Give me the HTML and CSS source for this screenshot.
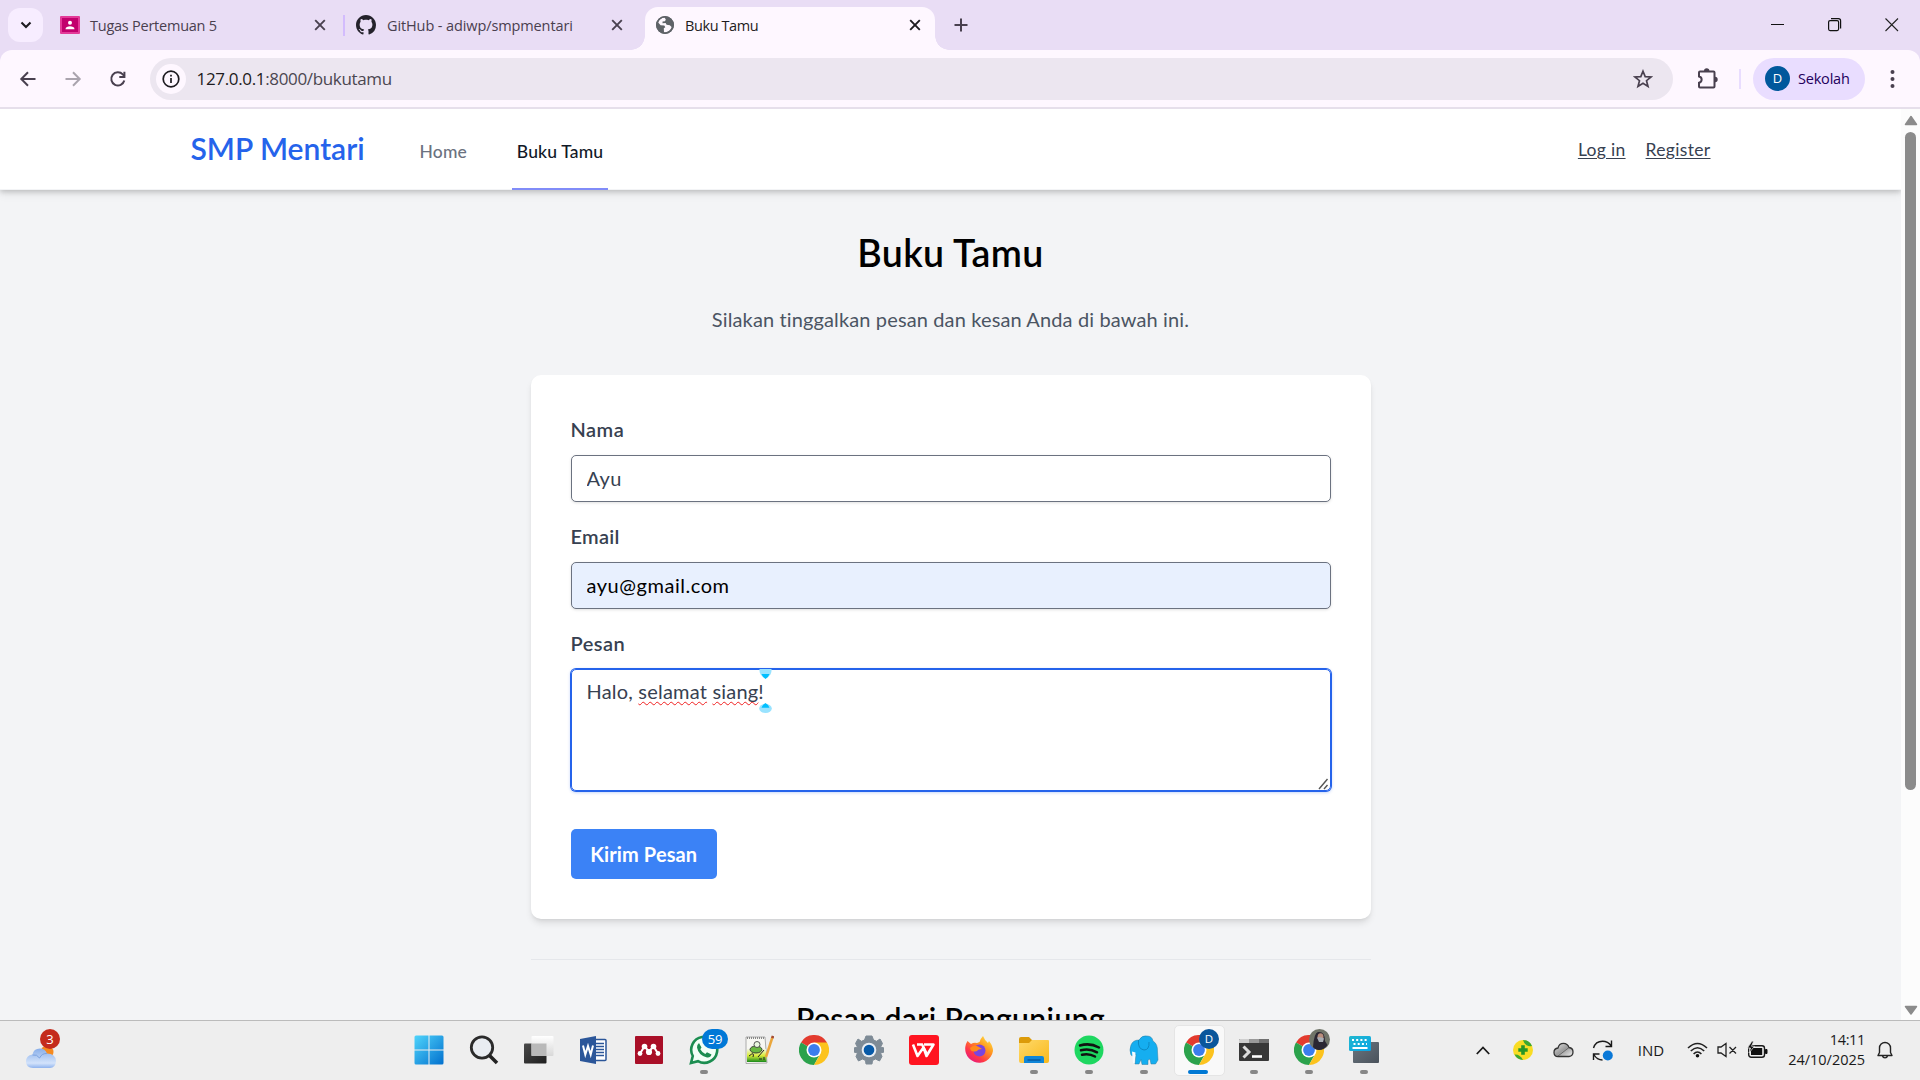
FILE: index.html
```html
<!DOCTYPE html>
<html lang="id">
<head>
<meta charset="utf-8">
<title>Buku Tamu</title>
<link rel="stylesheet" href="styles.css">
</head>
<body>
<svg class="defs" width="0" height="0">
  <defs>
    <symbol id="close" viewBox="0 0 12 12"><path d="M1.2 1.2 10.8 10.8M10.8 1.2 1.2 10.8" fill="none" stroke="currentColor" stroke-width="1.9"/></symbol>
    <symbol id="chrome" viewBox="0 0 30 30">
      <path d="M15 15 2 7.5A15 15 0 0 1 28 7.5L22 15Z" fill="#e33b2e"/>
      <path d="M15 15 2 7.5A15 15 0 0 0 15 30L20 21Z" fill="#2ba24c"/>
      <path d="M15 7.5H28A15 15 0 0 1 15 30L21.5 18.7Z" fill="#fcc31e"/>
      <circle cx="15" cy="15" r="7.5" fill="#fff"/>
      <circle cx="15" cy="15" r="5.9" fill="#3b7ded"/>
    </symbol>
    <linearGradient id="win" x1="0" y1="0" x2="1" y2="1"><stop offset="0" stop-color="#4fd4fb"/><stop offset="1" stop-color="#0270ce"/></linearGradient>
    <linearGradient id="cloud" x1="0" y1="0" x2="0" y2="1"><stop offset="0" stop-color="#88aee9"/><stop offset=".75" stop-color="#d3e3fb"/><stop offset="1" stop-color="#8fb3ee"/></linearGradient>
    <linearGradient id="dark" x1="0" y1="0" x2="1" y2="1"><stop offset="0" stop-color="#4a4a4a"/><stop offset="1" stop-color="#1e1e1e"/></linearGradient>
    <linearGradient id="pane" x1="0" y1="0" x2="0" y2="1"><stop offset="0" stop-color="#fff"/><stop offset="1" stop-color="#d8d8d8"/></linearGradient>
    <linearGradient id="fox" x1="1" y1="0" x2="0.2" y2="1"><stop offset="0" stop-color="#fff44f"/><stop offset=".4" stop-color="#ff9a1f"/><stop offset=".75" stop-color="#ff3647"/><stop offset="1" stop-color="#e31587"/></linearGradient>
    <linearGradient id="folder" x1="0" y1="0" x2="1" y2="1"><stop offset="0" stop-color="#ffd96a"/><stop offset="1" stop-color="#f9b91c"/></linearGradient>
    <linearGradient id="teal" x1="0" y1="0" x2="1" y2="1"><stop offset="0" stop-color="#22b8cf"/><stop offset="1" stop-color="#0aa5e6"/></linearGradient>
    <linearGradient id="slate" x1="0" y1="0" x2="1" y2="1"><stop offset="0" stop-color="#6b7680"/><stop offset="1" stop-color="#4a525b"/></linearGradient>
    <linearGradient id="field" x1="0" y1="0" x2="0" y2="1"><stop offset="0" stop-color="#f3f7e4"/><stop offset=".5" stop-color="#d9ec3a"/><stop offset="1" stop-color="#178a1c"/></linearGradient>
    <linearGradient id="gray" x1="0" y1="0" x2="1" y2="1"><stop offset="0" stop-color="#e8e8e8"/><stop offset=".5" stop-color="#9c9c9c"/><stop offset="1" stop-color="#f2f2f2"/></linearGradient>
  </defs>
</svg>

<header class="tabstrip">
  <button class="tab-search" aria-label="Tab"><svg width="12" height="8" viewBox="0 0 12 8"><path d="M1.5 1.5 6 6 10.500 1.5" fill="none" stroke="#1d1b20" stroke-width="2.100"/></svg></button>
  <div class="tab tab-first">
    <svg class="fav" width="20" height="18" viewBox="0 0 20 18"><rect width="20" height="18" rx="1" fill="#e33a98"/><rect x="2" y="2" width="16" height="14" fill="#c2006d"/><circle cx="10" cy="6.800" r="2" fill="#fff"/><path d="M5.500 13.200c0-3.800 9-3.800 9 0z" fill="#fff"/></svg>
    <span class="tab-title t1">Tugas Pertemuan 5</span>
    <svg class="x" width="12" height="12"><use href="#close"/></svg>
  </div>
  <i class="tab-sep"></i>
  <div class="tab tab-second">
    <svg class="fav" width="20" height="20" viewBox="0 0 16 16"><path fill="#24222b" d="M8 0C3.580 0 0 3.580 0 8c0 3.540 2.290 6.530 5.470 7.590.4.070.55-.17.55-.38 0-.19-.01-.82-.01-1.490-2.010.37-2.530-.49-2.690-.94-.09-.23-.48-.94-.82-1.130-.28-.15-.68-.52-.01-.53.63-.01 1.080.58 1.230.82.72 1.210 1.870.87 2.330.66.07-.52.28-.87.51-1.070-1.780-.2-3.640-.89-3.640-3.950 0-.87.31-1.590.82-2.150-.08-.2-.36-1.020.08-2.120 0 0 .67-.21 2.200.82.64-.18 1.320-.27 2-.27s1.360.09 2 .27c1.530-1.040 2.200-.82 2.200-.82.44 1.100.16 1.920.08 2.120.51.56.82 1.270.82 2.150 0 3.070-1.870 3.750-3.650 3.950.29.25.54.73.54 1.480 0 1.070-.01 1.930-.01 2.200 0 .21.15.46.55.38A8 8 0 0 0 16 8c0-4.420-3.580-8-8-8"/></svg>
    <span class="tab-title t2">GitHub - adiwp/smpmentari</span>
    <svg class="x" width="12" height="12"><use href="#close"/></svg>
  </div>
  <div class="tab tab-active">
    <svg class="fav" width="18" height="18" viewBox="0 0 18 18"><circle cx="9" cy="9" r="9" fill="#5f6368"/><path d="M8.500 1.600C5.500 2 3 3.500 2.200 6.500L4.600 9.200 8.300 9.400 9.300 11.200 7.800 12.300 8 16.300C10.500 16.600 14.800 14.500 15.600 11L13.800 9.200 10.600 8.800 9.600 7 6.500 7.200 6.600 5.600 9 5.300 9.800 3.500Z" fill="#fef7ff"/><circle cx="9" cy="9" r="8.200" fill="none" stroke="#5f6368" stroke-width="1.600"/></svg>
    <span class="tab-title t3">Buku Tamu</span>
    <svg class="x" width="12" height="12"><use href="#close"/></svg>
  </div>
  <svg class="plus" width="14" height="14" viewBox="0 0 14 14"><path d="M7 .5V13.500M.5 7H13.500" stroke="#49404f" stroke-width="2"/></svg>
  <div class="window-controls">
    <svg width="14" height="14" viewBox="0 0 14 14"><path d="M0 6.500H13" stroke="#111" stroke-width="1"/></svg>
    <svg width="14" height="14" viewBox="0 0 14 14"><rect x=".6" y="2.600" width="10" height="10" rx="1.500" fill="none" stroke="#111" stroke-width="1.200"/><path d="M3 .6H10.500Q12.600.6 12.600 2.700V10.500" fill="none" stroke="#111" stroke-width="1.200"/></svg>
    <svg width="14" height="14" viewBox="0 0 14 14"><path d="M.5.500 13 13M13 .5.500 13" stroke="#222" stroke-width="1.100"/></svg>
  </div>
</header>

<div class="toolbar">
  <svg class="nav-ico" width="20" height="20" viewBox="0 0 20 20"><path d="M17.500 10H3.500M10 3.300 3.300 10 10 16.700" fill="none" stroke="#49404f" stroke-width="2"/></svg>
  <svg class="nav-ico" width="20" height="20" viewBox="0 0 20 20"><path d="M2.500 10H16.500M10 3.300 16.700 10 10 16.700" fill="none" stroke="#aaa4ae" stroke-width="2"/></svg>
  <svg class="nav-ico" width="20" height="20" viewBox="0 0 20 20"><path d="M16.300 11.500A6.600 6.600 0 1 1 14.800 5.400L16.500 7.200" fill="none" stroke="#49404f" stroke-width="2"/><path d="M16.400 2.800V8H11.300" fill="none" stroke="#49404f" stroke-width="2"/></svg>
  <div class="omnibox">
    <span class="site-info"><svg width="18" height="18" viewBox="0 0 18 18"><circle cx="9" cy="9" r="7.800" fill="none" stroke="#1d1b20" stroke-width="1.700"/><path d="M9 8V13M9 4.800V6.500" stroke="#1d1b20" stroke-width="1.700"/></svg></span>
    <span class="url"><b>127.0.0.1</b>:8000/bukutamu</span>
    <svg class="star" width="20" height="20" viewBox="0 0 20 20"><path d="M10 2.200 12.200 7.600 18 8 13.500 11.700 15 17.400 10 14.300 5 17.400 6.500 11.700 2 8 7.800 7.600Z" fill="none" stroke="#49404f" stroke-width="1.700"/></svg>
  </div>
  <svg class="puzzle" width="22" height="22" viewBox="0 0 22 22"><path d="M2 4.500Q2 3.500 3 3.500H16.500Q17.500 3.500 17.500 4.500V18.500Q17.500 19.500 16.500 19.500H3Q2 19.500 2 18.500V14.700C5.500 14 5.500 9 2 8.500Z" fill="none" stroke="#49404f" stroke-width="2"/><path d="M7 3A2.700 2.700 0 0 1 12.400 3ZM18 8.800A2.700 2.700 0 0 1 18 14.200Z" fill="#49404f"/></svg>
  <i class="tool-sep"></i>
  <div class="profile"><span class="avatar">D</span><span class="profile-name">Sekolah</span></div>
  <svg class="dots" width="5" height="20" viewBox="0 0 5 20"><g fill="#49404f"><circle cx="2.500" cy="3" r="2"/><circle cx="2.500" cy="10" r="2"/><circle cx="2.500" cy="17" r="2"/></g></svg>
</div>

<div class="viewport">
  <div class="page">
    <nav class="site-nav">
      <div class="nav-inner">
        <a class="brand">SMP Mentari</a>
        <a class="nav-link home">Home</a>
        <a class="nav-link active">Buku Tamu</a>
        <div class="auth"><a class="login">Log in</a><a class="register">Register</a></div>
      </div>
    </nav>
    <main class="content">
      <h1>Buku Tamu</h1>
      <p class="lead">Silakan tinggalkan pesan dan kesan Anda di bawah ini.</p>
      <form class="card">
        <label class="l-nama">Nama</label>
        <input class="field nama" type="text" value="Ayu">
        <label class="l-email">Email</label>
        <input class="field autofill" type="text" value="ayu@gmail.com">
        <label class="l-pesan">Pesan</label>
        <div class="message">
          <span class="message-text">Halo, <u>selamat</u> <u>siang</u>!</span>
          <svg class="caret-mark" width="13" height="46" viewBox="0 0 13 46"><path d="M.5 1H12.500C13 6 10 9 6.500 10.500 3 9 0 6 .5 1Z" fill="#99e3ff"/><path d="M2.500 6H10.500Q9.500 9 6.500 11 3.500 9 2.500 6Z" fill="#00bfff"/><ellipse cx="6.500" cy="40.500" rx="6.300" ry="4.500" fill="#99e3ff"/><path d="M2.500 39.800H10.500Q9.500 36.500 6.500 35 3.500 36.500 2.500 39.800Z" fill="#00bfff"/></svg>
          <svg class="grip" width="11" height="12" viewBox="0 0 11 12"><path d="M1 11 9.500 1M6 11 9.500 7" stroke="#555" stroke-width="1.400"/></svg>
        </div>
        <button class="submit" type="button">Kirim Pesan</button>
      </form>
      <hr>
      <h2>Pesan dari Pengunjung</h2>
    </main>
  </div>
  <div class="scrollbar">
    <svg width="14" height="11" viewBox="0 0 14 11"><path d="M7 1.500 12.500 9.500H1.500Z" fill="#8b8b8b" stroke="#8b8b8b" stroke-width="1.500" stroke-linejoin="round"/></svg>
    <i class="thumb"></i>
    <svg class="down" width="14" height="11" viewBox="0 0 14 11"><path d="M7 9 12.500 1.500H1.500Z" fill="#8b8b8b" stroke="#8b8b8b" stroke-width="1.500" stroke-linejoin="round"/></svg>
  </div>
</div>

<footer class="taskbar">
  <div class="weather">
    <svg width="36" height="42" viewBox="0 0 36 42"><circle cx="22" cy="24" r="6.500" fill="#f58a1f"/><path d="M8 40Q1 39.500 1 33.500T7.500 26.500Q8.500 20.500 15 20.500 20 20.500 22 25.500 30.500 25.500 31 33 30.500 40 25 40Z" fill="url(#cloud)"/><path d="M7.500 27Q12 26 14.500 30Q17 25 22 25.500" fill="none" stroke="#7ba2df" stroke-width="1"/></svg>
    <span class="badge weather-badge">3</span>
  </div>
  <div class="apps">
    <div class="app"><svg width="30" height="30" viewBox="0 0 30 30"><path d="M.5 2Q.5.500 2 .5H14.500V14.500H.5ZM15.500.5H28Q29.500.5 29.500 2V14.500H15.500ZM.5 15.500H14.500V29.500H2Q.5 29.500.5 28ZM15.500 15.500H29.500V28Q29.500 29.500 28 29.500H15.500Z" fill="url(#win)"/></svg></div>
    <div class="app"><svg width="30" height="30" viewBox="0 0 30 30"><circle cx="13" cy="12.500" r="10.700" fill="#e9edf2" stroke="#2b2b2b" stroke-width="2.800"/><path d="M20.500 20.500 28 28" stroke="#222" stroke-width="3.600"/></svg></div>
    <div class="app"><svg width="30" height="30" viewBox="0 0 30 30"><rect x="0" y="8.500" width="22.500" height="20" rx="1" fill="url(#dark)"/><rect x="7.500" y="1" width="22" height="20" rx="1" fill="url(#pane)"/><rect x="7.500" y="8.500" width="15" height="12.500" fill="#b9b9b9"/></svg></div>
    <div class="app"><svg width="30" height="30" viewBox="0 0 30 30"><rect x="14" y="4.500" width="13" height="21" rx="1" fill="#fff" stroke="#2b5699" stroke-width="1.500"/><path d="M17 8.500H25M17 11.500H25M17 14.500H25M17 17.500H25M17 20.500H25" stroke="#2b5699" stroke-width="1.500"/><path d="M1 4 17 1V29L1 26Z" fill="#2b5699"/><path d="M4 10.500 6.300 19.500 9 11 11.700 19.500 14 10.500" fill="none" stroke="#fff" stroke-width="2"/></svg></div>
    <div class="app"><svg width="30" height="30" viewBox="0 0 30 30"><rect x="1" y="1" width="28" height="28" rx="1" fill="#a90f27"/><path d="M6 18.500 10.500 11.500 15 16.500 19.500 11.500 24 18.500" fill="none" stroke="#fff" stroke-width="2"/><g fill="#fff"><circle cx="10.500" cy="11.500" r="2.800"/><circle cx="19.500" cy="11.500" r="2.800"/><circle cx="6" cy="18.500" r="2.400"/><circle cx="15" cy="17" r="3.100"/><circle cx="24" cy="18.500" r="2.400"/></g></svg></div>
    <div class="app run"><svg width="30" height="30" viewBox="0 0 30 30"><path d="M2 28 3.800 21A13 13 0 1 1 9 26.200Z" fill="#f2fff6" stroke="#1b8d50" stroke-width="2.600"/><path d="M10 8 12.500 12.500 11.300 14.300Q13 17.500 16.300 19L18 17.300 22.500 19.500Q21.500 23 18 22.500 9.500 20.500 8 12.500 7.800 9.500 10 8Z" fill="#1b8d50"/></svg><span class="badge wa-badge">59</span></div>
    <div class="app"><svg width="30" height="30" viewBox="0 0 30 30"><path d="M2 2H21L23 28 2 28.500Z" fill="#f7f7f3" stroke="#999" stroke-width=".8"/><path d="M3 14H22L22.500 27H3Z" fill="url(#field)"/><path d="M3 3H21" stroke="#888" stroke-width="2" stroke-dasharray="1 1"/><ellipse cx="12" cy="14.500" rx="6" ry="3.500" fill="#69b842" stroke="#222" stroke-width=".8"/><circle cx="13" cy="9.500" r="3" fill="#e9f7df" stroke="#333" stroke-width=".8"/><path d="M5 21Q11 16 9 22M14 22 20 15M15 24H18M20 22V25" fill="none" stroke="#222" stroke-width="1"/><path d="M28.500 2 22 22" stroke="#eaa63c" stroke-width="2.500"/><path d="M29 1 28.300 3.200" stroke="#a44b34" stroke-width="2.600"/></svg></div>
    <div class="app"><svg width="30" height="30"><use href="#chrome"/></svg></div>
    <div class="app"><svg width="30" height="30" viewBox="0 0 30 30"><path d="M12 1H18L19.500 5 22.500 6.300 26 4 28.500 8.500 26.500 12 30 13V17L26.500 18 28 21.500 25.500 26 21.500 24 18.500 25.500 18 29H12L11.500 25.500 8.500 24 4.500 26 2 21.500 3.500 18 0 17V13L3.500 12 1.500 8.500 4 4 7.500 6.300 10.500 5Z" fill="#7e8b96" stroke="#7e8b96" stroke-linejoin="round"/><circle cx="15" cy="15" r="7.300" fill="#e8eef4"/><circle cx="15" cy="15" r="5.300" fill="#075aa8"/></svg></div>
    <div class="app"><svg width="30" height="30" viewBox="0 0 30 30"><rect width="30" height="30" rx="3" fill="#ff1420"/><path d="M4 9.500 8.500 21 14.500 12.500 17.500 21 24.500 9.500H15" fill="none" stroke="#fff" stroke-width="2.600" stroke-linejoin="round"/><path d="M8 9.500H13L18 19" fill="none" stroke="#fff" stroke-width="2.400"/></svg></div>
    <div class="app"><svg width="30" height="30" viewBox="0 0 30 30"><path d="M3.500 6 7 9Q10 7 13 8L15.500 7Q17 3 19 1 21 6 24 8L25 6Q29 11 29 16A14 14 0 1 1 3.500 6Z" fill="url(#fox)"/><circle cx="15.500" cy="15.500" r="6" fill="#7a44df"/><path d="M6 13Q10 9 15 12L18 14Q14 14 13 16 7 18 6 13Z" fill="#ff8a1c"/></svg></div>
    <div class="app run"><svg width="30" height="30" viewBox="0 0 30 30"><path d="M0 4Q0 2 2 2H10L13 5H28V14H0Z" fill="#dc9b09"/><path d="M0 8H10L13 5H29Q30 5 30 6V26Q30 28 28 28H2Q0 28 0 26Z" fill="url(#folder)"/><path d="M5 28V23Q5 21 7 21H23Q25 21 25 23V28Z" fill="#1086d8"/><path d="M8.500 25H21.500" stroke="#064f93" stroke-width="1.200"/></svg></div>
    <div class="app run"><svg width="30" height="30" viewBox="0 0 30 30"><circle cx="15" cy="15" r="14.500" fill="#1ed760"/><path d="M6 10.500Q16 7.500 25 12.500M7 15.300Q15.500 13 23 17.300M8 19.700Q15 18 21 21.500" fill="none" stroke="#111" stroke-width="2.500" stroke-linecap="round"/></svg></div>
    <div class="app run"><svg width="30" height="30" viewBox="0 0 30 30"><path d="M2 20Q0 15 2 10 4 5 10 5 13 0 18 1 23 1 24 6 29 9 28.500 17L29 25 26.500 29H22L21 24 19 25 19 29.500H13L12 24.500 10 29H6L7 19Q3 22 2 20Z" fill="#15aef0" stroke="#2c7fa3" stroke-width=".5"/><path d="M9.500 5Q8.500 14 15 15 20.500 15 20 7" fill="none" stroke="#0b84bd" stroke-width=".9"/><path d="M3 16.500 6.500 17.500 5.500 28H4Z" fill="#f4fbff"/></svg></div>
    <div class="app run focus"><svg width="30" height="30"><use href="#chrome"/></svg><span class="badge d-badge">D</span></div>
    <div class="app run"><svg width="30" height="30" viewBox="0 0 30 30"><rect x="0" y="4" width="30" height="22" rx="1" fill="#383838"/><path d="M0 8V5Q0 4 1 4H10V8Z" fill="#cfcfcf"/><path d="M10 4H20V8H10Z" fill="#999"/><path d="M20 4H29Q30 4 30 5V8H20Z" fill="#707070"/><path d="M4.500 11.500 10 17 4.500 22.500" fill="none" stroke="#ddd" stroke-width="3"/><path d="M13 21.500H23" stroke="#fff" stroke-width="2.600"/></svg></div>
    <div class="app run"><svg width="30" height="30"><use href="#chrome"/></svg><svg class="photo" width="21" height="21" viewBox="0 0 21 21"><circle cx="10.500" cy="10.500" r="10.500" fill="#6f7468"/><path d="M4 18Q5 4 9 3 16 2 16 12L18.500 16Q15 21 10 21 6 21 4 18Z" fill="#2a2733"/><ellipse cx="11.500" cy="8" rx="3" ry="3.800" fill="#b98e7c"/><path d="M8 8.500Q12 7.500 15 9.500L14 13H10Z" fill="#a7adb4"/></svg></div>
    <div class="app run"><svg width="30" height="30" viewBox="0 0 30 30"><rect x="4" y="7" width="26" height="21" rx="1" fill="url(#slate)"/><rect x="0" y="1" width="22" height="15" rx="1.500" fill="url(#teal)"/><path d="M3 5H19.500M4.500 9H18" stroke="#fff" stroke-width="2" stroke-dasharray="2 2.200"/><path d="M3.500 13H18.500" stroke="#fff" stroke-width="2"/></svg></div>
  </div>
  <div class="tray">
    <span class="cell"><svg width="14" height="9" viewBox="0 0 14 9"><path d="M.8 8 7 1.500 13.200 8" fill="none" stroke="#1a1a1a" stroke-width="1.800"/></svg></span>
    <span class="cell"><svg width="20" height="20" viewBox="0 0 20 20"><circle cx="10" cy="10" r="10" fill="#f9dc23"/><path d="M10 0A10 10 0 0 1 19 6Q12 7 10 0ZM10 20A10 10 0 0 1 1.500 14.500Q7 14 10 20Z" fill="#3ca832"/><path d="M10 5.300V14.700M5.300 10H14.700" stroke="#279626" stroke-width="3.600"/></svg></span>
    <span class="cell"><svg width="21" height="16" viewBox="0 0 21 16"><path d="M5 14.500Q1 14.500 1 10.500T5 6Q6 1.300 10.500 1.300 14.500 1.300 16 5.500 20 6 20 10T16 14.500Z" fill="url(#gray)" stroke="#333" stroke-width="1.300"/><path d="M5 14 16 5.500" stroke="#555" stroke-width=".8"/></svg></span>
    <span class="cell"><svg width="22" height="21" viewBox="0 0 22 21"><path d="M1.500 8Q3.500 1.200 10.500 1.200 16 1.200 19.300 6M19.500.5V6.500H13.500M1.500 20V14H7.500M1.800 14.500Q5 20 10.500 20" fill="none" stroke="#1a1a1a" stroke-width="1.400"/><circle cx="15.800" cy="15.500" r="5" fill="#0a78d7"/></svg></span>
    <span class="lang">IND</span>
    <span class="mini"><svg width="21" height="16" viewBox="0 0 21 16"><path d="M1 6Q10.500-3 20 6M3.800 9Q10.500 2.500 17.200 9M6.600 12Q10.500 8 14.400 12" fill="none" stroke="#222" stroke-width="1.600"/><circle cx="10.500" cy="13.700" r="1.800" fill="#111"/></svg></span>
    <span class="mini"><svg width="20" height="16" viewBox="0 0 20 16"><path d="M1 5H4L9 1.500V14.500L4 11H1ZM12.500 5 19 11.500M19 5 12.500 11.500" fill="none" stroke="#222" stroke-width="1.300"/></svg></span>
    <span class="mini"><svg width="21" height="18" viewBox="0 0 21 18"><rect x="1.700" y="4.700" width="15.800" height="11.600" rx="2.500" fill="none" stroke="#1a1a1a" stroke-width="1.400"/><rect x="4" y="7" width="11.200" height="7" fill="#111"/><path d="M18.500 8.500H20V12.500H18.500Z" fill="#111" stroke="#111"/><path d="M5 0 .5 7H3.500L2 12 7.500 5.200H4.500L6.500.5Z" fill="#111" stroke="#eee" stroke-width=".7"/></svg></span>
    <span class="clock"><span class="time">14:11</span><span class="date">24/10/2025</span></span>
    <svg class="bell" width="18" height="19" viewBox="0 0 18 19"><path d="M2 14.500H16L14.500 11.500V7A5.500 5.500 0 0 0 3.500 7V11.500ZM6.500 15A2.600 2.600 0 0 0 11.500 15" fill="none" stroke="#222" stroke-width="1.400" stroke-linejoin="round"/></svg>
  </div>
</footer>
</body>
</html>
```
FILE: styles.css
```css
* { box-sizing: border-box; }
body {
  margin: 0; width: 1920px; height: 1080px; overflow: hidden;
  display: flex; flex-direction: column;
  font-family: "Open Sans", "Noto Sans", sans-serif;
  color: #1d1b20;
}
svg { display: block; flex: none; }
.defs { position: absolute; }
button, input { font: inherit; border: 0; padding: 0; }

/* tab strip */
.tabstrip { height: 50px; flex: none; display: flex; align-items: center; background: #e9ddf5; padding-left: 8px; color: #49404f; font-size: 14.5px; }
.tab-search { width: 35px; height: 34px; border-radius: 12px; background: #f7edff; display: flex; align-items: center; justify-content: center; }
.tab { display: flex; align-items: center; }
.tab-title { flex: 1; white-space: nowrap; line-height: 20px; margin-top: 1px; }
.tab-first { width: 266px; margin-left: 17px; gap: 10px; }
.tab-sep { width: 2px; height: 21px; margin: 0 11px 0 17px; background: #d3bcfd; }
.tab-second { width: 267px; gap: 11px; }
.t1 { letter-spacing: -0.24px; }
.t2 { letter-spacing: -0.11px; }
.t3 { letter-spacing: -0.4px; }
.tab-active { position: relative; width: 290px; height: 43px; margin: 7px 0 0 22px; padding: 0 14px 7px 11px; gap: 11px; border-radius: 13px 13px 0 0; background: #fef7ff; color: #1d1b20; }
.tab-active::before, .tab-active::after { content: ""; position: absolute; bottom: 0; width: 14px; height: 14px; }
.tab-active::before { left: -14px; background: radial-gradient(circle at 0 0, transparent 13.500px, #fef7ff 14px); }
.tab-active::after { right: -14px; background: radial-gradient(circle at 100% 0, transparent 13.500px, #fef7ff 14px); }
.plus { margin-left: 19px; }
.window-controls { display: flex; gap: 43px; margin-left: auto; padding-right: 21.500px; }

/* toolbar */
.toolbar { height: 59px; flex: none; display: flex; align-items: center; background: #fef7ff; border-bottom: 2px solid #e6dfeb; padding-left: 18px; border-radius: 12px 12px 0 0; box-shadow: 0 -12px 0 0 #e9ddf5; clip-path: inset(0); position: relative; }
.nav-ico { margin-right: 25px; }
.omnibox { width: 1523px; height: 42px; margin-left: -3px; border-radius: 21px; background: #ece6f0; display: flex; align-items: center; padding: 0 20px 0 6px; }
.site-info { width: 30px; height: 30px; border-radius: 50%; background: #fef7ff; display: flex; align-items: center; justify-content: center; }
.url { flex: 1; margin: 1px 0 0 10.500px; font-size: 17px; line-height: 24px; letter-spacing: -0.34px; color: #4b4751; }
.url b { font-weight: 400; color: #1d1b20; }
.puzzle { margin-left: 24px; }
.tool-sep { width: 2px; height: 20px; margin: 0 12px 0 20px; background: #e9ddff; }
.profile { width: 112px; height: 42px; border-radius: 21px; background: #e9ddff; display: flex; align-items: center; padding-left: 12px; }
.avatar { width: 25px; height: 25px; border-radius: 50%; background: #00589c; color: #fff; font-size: 13px; line-height: 25px; text-align: center; }
.profile-name { margin-left: 8px; font-size: 14.5px; letter-spacing: -0.2px; color: #23005c; }
.dots { margin-left: 25px; }

/* page */
.viewport { height: 911px; flex: none; display: flex; overflow: hidden; }
.page { width: 1901px; background: #f3f4f6; font-family: Lato, "Liberation Sans", sans-serif; font-size: 20px; font-variant-ligatures: none; overflow: hidden; }
.site-nav { height: 81px; background: #fff; border-bottom: 1px solid #f3f4f6; box-shadow: 0 2px 5px rgba(0,0,0,.18), 0 5px 9px rgba(0,0,0,.06); }
.nav-inner { width: 1600px; height: 81px; margin: 0 auto; padding: 0 40px; display: flex; align-items: center; white-space: nowrap; }
.brand { width: 174px; font-size: 30px; font-weight: 600; color: #2563eb; line-height: 36px; margin-bottom: 3px; }
.nav-link { font-size: 17.500px; font-weight: 500; height: 81px; line-height: 85px; color: #6b7280; letter-spacing: .15px; }
.home { margin-left: 55px; width: 48px; }
.active { margin-left: 44.500px; width: 96px; text-align: center; color: #111827; border-bottom: 2px solid #818cf8; }
.auth { margin-left: auto; display: flex; gap: 20px; font-size: 17.500px; color: #374151; line-height: 24px; padding-top: 1px; }
.auth a { text-decoration: underline; text-underline-offset: 2px; letter-spacing: .32px; }
.content { width: 840px; margin: 0 auto; padding-top: 40px; }
h1 { margin: 0 0 29px; font-size: 37.500px; line-height: 45px; font-weight: 600; text-align: center; color: #000; letter-spacing: .38px; }
.lead { margin: 0 0 41px; line-height: 30px; text-align: center; color: #4b5563; letter-spacing: .13px; }
.card { height: 544px; padding: 39px 40px 40px; background: #fff; border-radius: 10px; box-shadow: 0 5px 7px -1px rgba(0,0,0,.1), 0 2px 4px -2px rgba(0,0,0,.1); display: flex; flex-direction: column; }
label { line-height: 30px; margin-bottom: 11px; font-weight: 600; color: #374151; letter-spacing: .5px; }
.l-email { letter-spacing: .3px; }
.field { width: 100%; height: 47px; margin-bottom: 19px; padding: 0 15px 2px; border: 1px solid #6b7280; border-radius: 5px; background: #fff; color: #374151; box-shadow: 0 1px 3px rgba(0,0,0,.12); }
.nama { letter-spacing: .4px; }
.autofill { background: #e8f0fe; color: #000; letter-spacing: .54px; }
.message { position: relative; height: 122px; padding: 6px 15px; border: 1px solid #2563eb; border-radius: 5px; box-shadow: 0 0 0 1px #2563eb, 0 1px 3px 1px rgba(37,99,235,.25); color: #374151; line-height: 30px; letter-spacing: .2px; }
.message u { text-decoration: underline wavy #f02020 1.300px; text-underline-offset: 2px; text-decoration-skip-ink: none; }
.caret-mark { position: absolute; left: 187px; top: -2px; }
.grip { position: absolute; right: 1px; bottom: 0; }
.submit { width: 146.500px; height: 50px; margin-top: 38px; border-radius: 5px; background: #3b82f6; color: #fff; font-weight: 700; line-height: 50px; letter-spacing: .12px; }
hr { margin: 40px 0; border: 0; height: 1px; background: #e5e7eb; }
h2 { margin: 0; font-size: 30px; line-height: 37px; font-weight: 600; text-align: center; color: #000; white-space: nowrap; letter-spacing: .41px; }
.scrollbar { width: 19px; background: #fcfcfc; display: flex; flex-direction: column; align-items: center; padding: 6px 0 4px; }
.thumb { width: 11px; height: 658px; margin-top: 6px; border-radius: 6px; background: #8b8b8b; }
.down { margin-top: auto; }

/* taskbar */
.taskbar { height: 60px; flex: none; display: flex; align-items: center; background: #eee; border-top: 1px solid #bbb; color: #1a1a1a; }
.weather { position: relative; width: 401px; padding-left: 25px; padding-bottom: 3px; }
.badge { position: absolute; color: #fff; text-align: center; }
.weather-badge { left: 40px; top: 1px; width: 20px; height: 20px; border-radius: 50%; background: #c42b1c; font-size: 13px; line-height: 20px; }
.apps { display: flex; height: 59px; }
.app { position: relative; width: 55px; height: 59px; padding-bottom: 1px; display: flex; align-items: center; justify-content: center; }
.run::after { content: ""; position: absolute; left: 23.500px; top: 49px; width: 8px; height: 4px; border-radius: 2px; background: #868686; }
.focus::before { content: ""; position: absolute; left: 3px; top: 4px; width: 49px; height: 49px; border-radius: 5px; background: #f9f9f9; border: 1px solid #e5e5e5; }
.focus svg { position: relative; }
.focus::after { left: 17px; width: 20px; background: #0078d4; }
.wa-badge { left: 26px; top: 8px; width: 26px; height: 20px; border-radius: 10px; background: #0078d7; font-size: 13px; line-height: 20px; letter-spacing: -.3px; }
.d-badge { left: 28px; top: 8px; width: 20px; height: 20px; border-radius: 50%; background: #0a569b; font-size: 11.500px; line-height: 20px; }
.photo { position: absolute; left: 28px; top: 8px; }
.tray { display: flex; align-items: center; margin-left: 72px; height: 59px; padding-bottom: 1px; }
.cell { width: 40px; display: flex; justify-content: center; }
.lang { width: 56px; text-align: center; font-size: 15px; letter-spacing: 0; }
.mini { width: 30px; display: flex; justify-content: center; }
.lang + .mini { margin-left: 3px; }
.clock { width: 93px; display: flex; flex-direction: column; align-items: flex-end; font-size: 14.500px; line-height: 20px; }
.time { letter-spacing: -.35px; }
.date { letter-spacing: -.02px; }
.bell { margin-left: 11px; }
```
